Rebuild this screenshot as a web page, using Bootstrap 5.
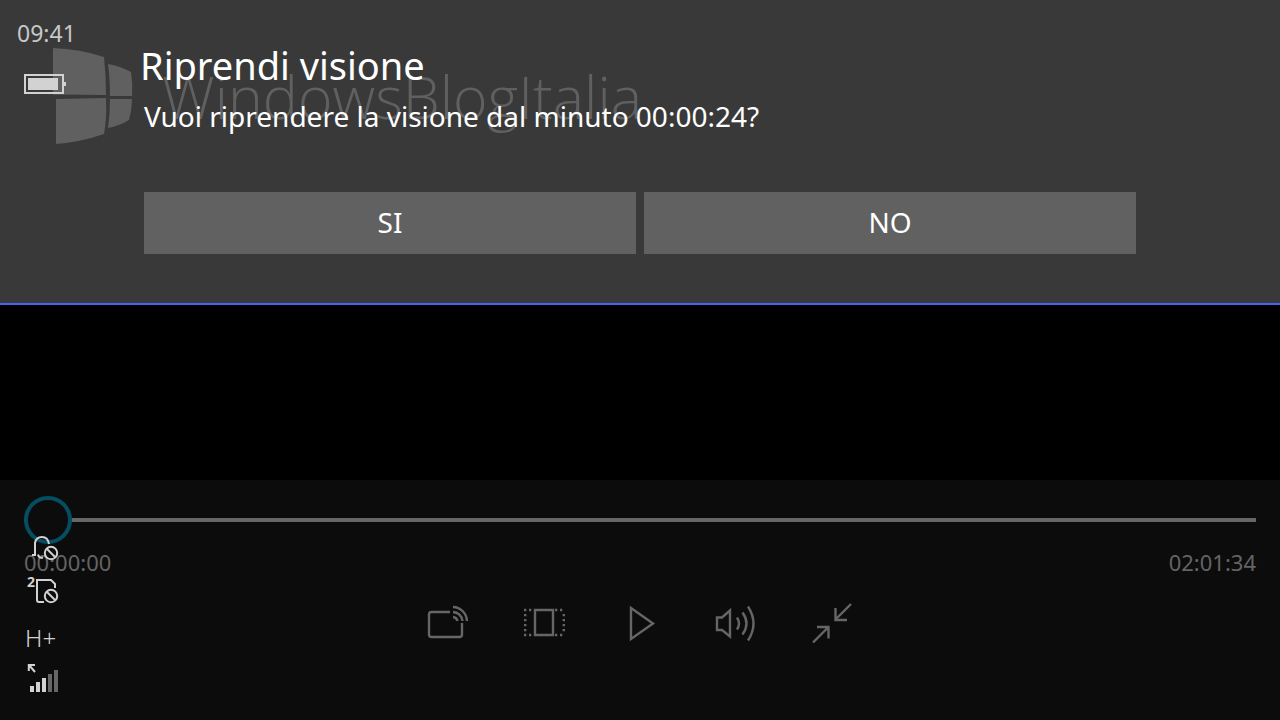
<!DOCTYPE html>
<html lang="it" data-bs-theme="dark">
<head>
<meta charset="utf-8">
<meta name="viewport" content="width=device-width, initial-scale=1">
<title>Riprendi visione</title>
<link href="https://cdn.jsdelivr.net/npm/bootstrap@5.3.0/dist/css/bootstrap.min.css" rel="stylesheet">
<style>
  body { background: #000; color: #fff; font-family: "Noto Sans", "Open Sans", sans-serif; }
  .resume-panel { background: #393939; border-bottom: 2px solid #4463f2; padding: 40px 144px 49px; }
  .resume-title { font-size: 38px; line-height: 50px; margin: 0 0 4px -4px; font-weight: 400; }
  .resume-text { font-size: 28px; line-height: 44px; margin: 0 0 54px; }
  .resume-btn { background: #616161; color: #fff; border: 0; border-radius: 0; font-size: 28px; line-height: 40px; padding: 10px 10px 12px; }
  .resume-btn:hover { background: #707070; color: #fff; }
  .brand-mark { left: 52px; top: 47px; color: #606060; }
  .brand-name { font-family: "Open Sans", "Noto Sans", sans-serif; font-size: 59px; font-weight: 300; line-height: 80px; margin-left: 28px; }
  .front { z-index: 1; }
  .status-rail { width: 80px; padding: 20px 0 26px; color: #d2d2d2; z-index: 2; }
  .clock { font-size: 23px; line-height: 26px; margin-left: 17px; color: #c8c8c8; }
  .network { font-size: 24px; line-height: 30px; font-weight: 300; margin: 17px 0 9px 25px; }
  .sim-number { font: 700 14px/12px "Noto Sans", sans-serif; left: 27px; top: -2px; }
  .player { background: #0c0c0c; padding: 16px 24px 54px; }
  .seek { appearance: none; -webkit-appearance: none; height: 48px; background: transparent; margin: 0; }
  .seek::-webkit-slider-runnable-track { height: 4px; background: #666; }
  .seek::-webkit-slider-thumb { -webkit-appearance: none; width: 48px; height: 48px; margin-top: -22px; border: 4px solid #044e63; border-radius: 50%; background: #0c0c0c; }
  .seek::-moz-range-track { height: 4px; background: #666; }
  .seek::-moz-range-thumb { width: 40px; height: 40px; border: 4px solid #044e63; border-radius: 50%; background: #0c0c0c; }
  .times { font-size: 22px; line-height: 36px; color: #646464; }
  .tool { width: 96px; height: 86px; padding: 0; border: 0; border-radius: 0; color: #666; }
  .tool:hover { color: #999; }
</style>
</head>
<body>
<main class="d-flex flex-column min-vh-100 position-relative">
  <div class="brand-mark position-absolute d-flex align-items-center pe-none" aria-hidden="true">
    <svg width="82" height="98" viewBox="0 0 82 98" fill="currentColor">
      <path d="M1 1Q28 2 52 10Q54 28 54 48L1 47.500Z"/>
      <path d="M4 52L54 51Q55 71 52 87Q29 95 4 97Z"/>
      <path d="M56 17Q68 19 79 25Q81 37 80 49H58Q58 31 56 17Z"/>
      <path d="M58 52H80Q80 63 77 73Q67 79 56 81Q58 67 58 52Z"/>
    </svg>
    <span class="brand-name">WindowsBlogItalia</span>
  </div>

  <section class="resume-panel" role="dialog" aria-labelledby="resumeTitle" aria-describedby="resumeText">
    <h1 class="resume-title position-relative front" id="resumeTitle">Riprendi visione</h1>
    <p class="resume-text position-relative front" id="resumeText">Vuoi riprendere la visione dal minuto 00:00:24?</p>
    <div class="d-flex gap-2">
      <button type="button" class="btn resume-btn flex-fill w-50">SI</button>
      <button type="button" class="btn resume-btn flex-fill w-50">NO</button>
    </div>
  </section>

  <section class="player mt-auto" aria-label="Controlli di riproduzione">
    <input type="range" class="seek d-block w-100" min="0" max="7294" value="0" aria-label="Posizione">
    <div class="times d-flex justify-content-between">
      <span>00:00:00</span>
      <span>02:01:34</span>
    </div>
    <div class="d-flex justify-content-center">
      <button type="button" class="btn tool" aria-label="Trasmetti">
        <svg width="48" height="48" viewBox="0 0 48 48" fill="none" stroke="currentColor" stroke-width="2.400">
          <path d="M26 13H7.500Q5 13 5 15.500V35.500Q5 38 7.500 38H35.500Q38 38 38 35.500V24"/>
          <path d="M29 18A5 5 0 0 1 33.500 22M29 13A10 10 0 0 1 38.500 22M29 8A14.500 14.500 0 0 1 43 22"/>
        </svg>
      </button>
      <button type="button" class="btn tool" aria-label="Proporzioni">
        <svg width="48" height="48" viewBox="0 0 48 48" fill="none" stroke="currentColor" stroke-width="2.400">
          <path d="M15 11H33V36H15Z"/>
          <path stroke-dasharray="2.300 2.700" d="M4 11H13M4 36H13M35 11H45M35 36H45M5.200 15V35M43.800 15V35"/>
        </svg>
      </button>
      <button type="button" class="btn tool" aria-label="Riproduci">
        <svg width="48" height="48" viewBox="0 0 48 48" fill="none" stroke="currentColor" stroke-width="2.400">
          <path d="M15 9L37 24.500L15 40Z"/>
        </svg>
      </button>
      <button type="button" class="btn tool" aria-label="Volume">
        <svg width="48" height="48" viewBox="0 0 48 48" fill="none" stroke="currentColor" stroke-width="2.400">
          <path d="M5 18.500H10L18 11.500V37.500L10 31H5Z"/>
          <path d="M25 18.500Q29 24.500 25 30.500M30.500 13.500Q38.500 24.500 30.500 35.500M36 7.500Q47 24.500 36 41.500"/>
        </svg>
      </button>
      <button type="button" class="btn tool" aria-label="Esci da schermo intero">
        <svg width="48" height="48" viewBox="0 0 48 48" fill="none" stroke="currentColor" stroke-width="2.400">
          <path d="M43 5L27.500 20.500M27.500 9V21H39M5 43.500L20.500 28M9 28H20.500V39.500"/>
        </svg>
      </button>
    </div>
  </section>

  <aside class="status-rail position-absolute top-0 bottom-0 start-0 d-flex flex-column justify-content-between pe-none" aria-label="Stato del telefono">
    <div>
      <div class="clock">09:41</div>
      <svg class="d-block ms-4 mt-4" width="44" height="28" viewBox="0 0 44 28" fill="currentColor" role="img" aria-label="Batteria carica">
        <path d="M1 5H39V23H1Z" fill="none" stroke="currentColor" stroke-width="2"/>
        <path d="M4 8H34V20H4ZM40 12H42V16H40Z"/>
      </svg>
    </div>
    <div>
      <svg class="d-block" width="80" height="28" viewBox="0 0 80 28" fill="none" stroke="currentColor" stroke-width="2" role="img" aria-label="SIM 1 non disponibile">
        <path d="M32 21H35V9Q36 3 42 3Q48 3 49 10M38 20.500Q39 24.500 43 23.500"/>
        <circle cx="51" cy="19" r="6.200"/><path d="M47 15L55 23"/>
      </svg>
      <div class="position-relative mt-3">
        <span class="sim-number position-absolute">2</span>
        <svg class="d-block" width="80" height="28" viewBox="0 0 80 28" fill="none" stroke="currentColor" stroke-width="2" role="img" aria-label="SIM 2 non disponibile">
          <path d="M44 24H39Q37 24 37 22V2H51L55 6V10"/>
          <circle cx="51" cy="18" r="6.200"/><path d="M47 14L55 22"/>
        </svg>
      </div>
      <div class="network">H+</div>
      <svg class="d-block" width="80" height="32" viewBox="0 0 80 32" fill="currentColor" role="img" aria-label="Segnale">
        <path d="M29 3L35 10M28.800 9V3H35" fill="none" stroke="currentColor" stroke-width="2"/>
        <path d="M30 24H34V30H30ZM36 20H40V30H36ZM42 16H46V30H42Z"/>
        <path d="M48 12H52V30H48ZM54 8H58V30H54Z" fill="#666"/>
      </svg>
    </div>
  </aside>
</main>
<script src="https://cdn.jsdelivr.net/npm/bootstrap@5.3.0/dist/js/bootstrap.bundle.min.js"></script>
</body>
</html>
